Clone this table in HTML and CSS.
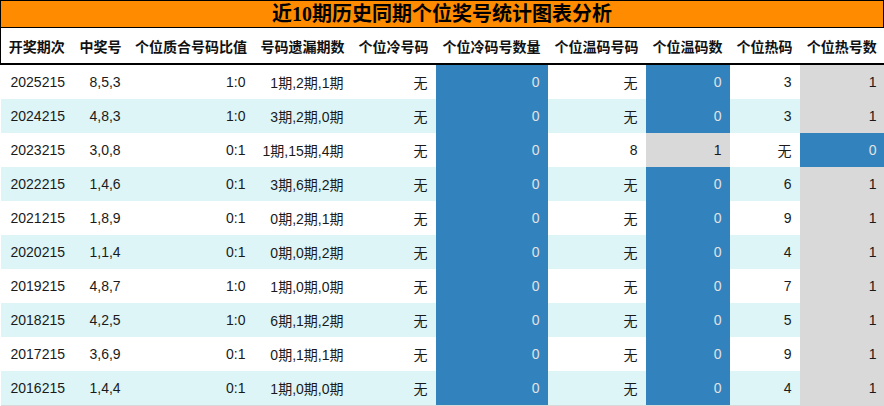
FILE: index.html
```html
<!DOCTYPE html>
<html lang="zh">
<head>
<meta charset="utf-8">
<title>近10期历史同期个位奖号统计图表分析</title>
<link rel="stylesheet" href="styles.css">
</head>
<body>
<div class="title">近10期历史同期个位奖号统计图表分析</div>
<table class="stats">
  <colgroup>
    <col class="c1"><col class="c2"><col class="c3"><col class="c4"><col class="c5">
    <col class="c6"><col class="c7"><col class="c8"><col class="c9"><col class="c10">
  </colgroup>
  <thead>
    <tr>
      <th>开奖期次</th><th>中奖号</th><th>个位质合号码比值</th><th>号码遗漏期数</th><th>个位冷号码</th>
      <th>个位冷码号数量</th><th>个位温码号码</th><th>个位温码数</th><th>个位热码</th><th>个位热号数</th>
    </tr>
  </thead>
  <tbody>
    <tr><td class="issue">2025215</td><td class="nums">8,5,3</td><td>1:0</td><td>1期,2期,1期</td><td>无</td><td class="blue">0</td><td>无</td><td class="blue">0</td><td>3</td><td class="gray">1</td></tr>
    <tr><td class="issue">2024215</td><td class="nums">4,8,3</td><td>1:0</td><td>3期,2期,0期</td><td>无</td><td class="blue">0</td><td>无</td><td class="blue">0</td><td>3</td><td class="gray">1</td></tr>
    <tr><td class="issue">2023215</td><td class="nums">3,0,8</td><td>0:1</td><td>1期,15期,4期</td><td>无</td><td class="blue">0</td><td>8</td><td class="gray">1</td><td>无</td><td class="blue">0</td></tr>
    <tr><td class="issue">2022215</td><td class="nums">1,4,6</td><td>0:1</td><td>3期,6期,2期</td><td>无</td><td class="blue">0</td><td>无</td><td class="blue">0</td><td>6</td><td class="gray">1</td></tr>
    <tr><td class="issue">2021215</td><td class="nums">1,8,9</td><td>0:1</td><td>0期,2期,1期</td><td>无</td><td class="blue">0</td><td>无</td><td class="blue">0</td><td>9</td><td class="gray">1</td></tr>
    <tr><td class="issue">2020215</td><td class="nums">1,1,4</td><td>0:1</td><td>0期,0期,2期</td><td>无</td><td class="blue">0</td><td>无</td><td class="blue">0</td><td>4</td><td class="gray">1</td></tr>
    <tr><td class="issue">2019215</td><td class="nums">4,8,7</td><td>1:0</td><td>1期,0期,0期</td><td>无</td><td class="blue">0</td><td>无</td><td class="blue">0</td><td>7</td><td class="gray">1</td></tr>
    <tr><td class="issue">2018215</td><td class="nums">4,2,5</td><td>1:0</td><td>6期,1期,2期</td><td>无</td><td class="blue">0</td><td>无</td><td class="blue">0</td><td>5</td><td class="gray">1</td></tr>
    <tr><td class="issue">2017215</td><td class="nums">3,6,9</td><td>0:1</td><td>0期,1期,1期</td><td>无</td><td class="blue">0</td><td>无</td><td class="blue">0</td><td>9</td><td class="gray">1</td></tr>
    <tr><td class="issue">2016215</td><td class="nums">1,4,4</td><td>0:1</td><td>1期,0期,0期</td><td>无</td><td class="blue">0</td><td>无</td><td class="blue">0</td><td>4</td><td class="gray">1</td></tr>
  </tbody>
</table>
</body>
</html>
```

FILE: styles.css
```css
html, body {
  margin: 0;
  padding: 0;
  background: #ffffff;
}

body {
  width: 884px;
  font-family: "Liberation Sans", "Noto Sans CJK SC", sans-serif;
  color: #1a1a1a;
}

.title {
  box-sizing: border-box;
  height: 28px;
  background: #ff8c00;
  border: 1px solid #000;
  text-align: center;
  font-family: "Liberation Serif", "Noto Sans CJK SC", serif;
  font-weight: bold;
  font-size: 20px;
  line-height: 26px;
  color: #000;
}

.stats {
  width: 884px;
  border-collapse: collapse;
  table-layout: fixed;
  font-size: 14px;
}

.c1 { width: 72px; }
.c2 { width: 56px; }
.c3 { width: 125px; }
.c4 { width: 98px; }
.c5 { width: 84px; }
.c6 { width: 112px; }
.c7 { width: 98px; }
.c8 { width: 84px; }
.c9 { width: 70px; }
.c10 { width: 85px; }

.stats th {
  height: 35px;
  padding: 0;
  font-family: "Noto Sans CJK SC", sans-serif;
  font-weight: bold;
  font-size: 14px;
  color: #111;
  text-align: center;
  white-space: nowrap;
  background: #fff;
  border-bottom: 2px solid #000;
}

.stats thead tr th:first-child { border-left: 1px solid #000; }
.stats thead tr th:last-child { border-right: 1px solid #000; }

.stats td {
  height: 34px;
  padding: 0 8px 0 0;
  text-align: right;
  white-space: nowrap;
  vertical-align: middle;
  background: #fff;
}

.stats tbody tr:nth-child(even) td {
  background: #ddf5f7;
}

.stats tbody tr:last-child td {
  border-bottom: 1px solid #d8d8d8;
}

.stats td.issue {
  text-align: left;
  padding: 0 0 0 10px;
}

.stats td.nums {
  text-align: left;
  padding: 0 0 0 17px;
}

.stats tbody tr td.blue {
  background: #3182bd;
  color: #e3e3e3;
}

.stats tbody tr td.gray {
  background: #d9d9d9;
}

.stats td:nth-child(9),
.stats td:nth-child(10) {
  padding-right: 8px;
}
```
